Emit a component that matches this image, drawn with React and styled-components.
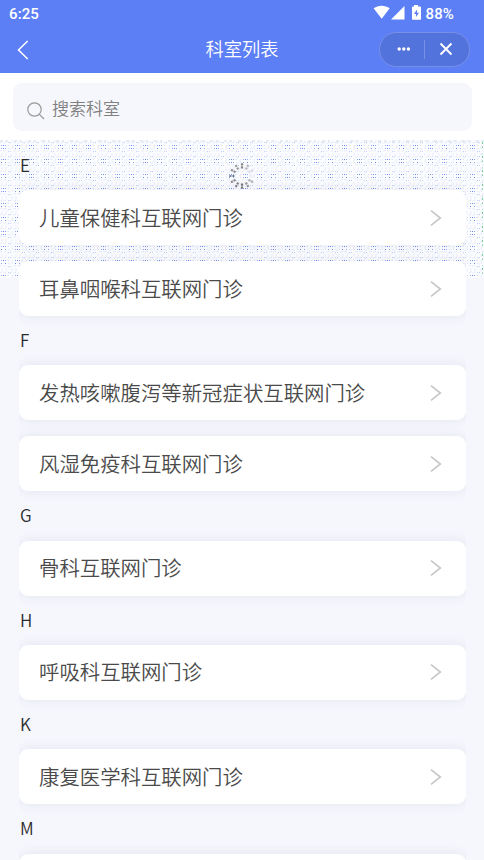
import React from 'react';
import styled, { createGlobalStyle } from 'styled-components';

const GlobalStyle = createGlobalStyle`
    *{
        box-sizing: border-box;
    }
    body{
        margin: 0;
        background: #f6f7fd;
        font-family: "Noto Sans CJK SC", sans-serif;
        font-weight: 350;
        overflow: hidden;
    }
`;

const groups = [
    { letter: 'E', items: ['儿童保健科互联网门诊', '耳鼻咽喉科互联网门诊'] },
    { letter: 'F', items: ['发热咳嗽腹泻等新冠症状互联网门诊', '风湿免疫科互联网门诊'] },
    { letter: 'G', items: ['骨科互联网门诊'] },
    { letter: 'H', items: ['呼吸科互联网门诊'] },
    { letter: 'K', items: ['康复医学科互联网门诊'] },
    { letter: 'M', items: [''] },
];

// dot offsets around the centre of one dither cell, by colour
const dotLayers = [
    { fill: '#f3f4fd', size: 2, dots: [[-6, -6], [-2, -6], [2, -6], [6, -4], [-4, -4], [0, -4], [4, -2], [-6, 0], [6, 2], [-4, 4], [0, 4], [4, 5], [-6, 7], [-2, 7], [2, 7]] },
    { fill: '#dfe5fb', size: 1, dots: [[-2, -4], [2, -4], [-5, -1], [5, -1], [-5, 2], [5, 2], [-2, 4], [2, 4]] },
    { fill: '#c6d1f9', size: 1, dots: [[5, -4], [7, -4], [5, 5], [7, 5]] },
    { fill: '#8fa8f5', size: 1, dots: [[-2, -1], [2, -1], [-2, 2], [2, 2]] },
];

const cells = [];
for (let row = 0; row < 10; row += 1) {
    for (let col = 0; col < 35; col += 1) {
        cells.push([Math.round(3 + col * 14.22), Math.round(6 + row * 14.4), (col + row * 2) % 3]);
    }
}

const square = (x, y, size) => `M${x} ${y}h${size}v${size}h-${size}z`;

function Dither() {
    return (
        <DitherSvg width="484" height="138" shapeRendering="crispEdges">
            <rect width="484" height="138" fill="#fcfdff" />
            {dotLayers.map(({ fill, size, dots }) => (
                <path
                    key={fill}
                    fill={fill}
                    d={cells.map(([x, y]) => dots.map(([dx, dy]) => square(x + dx, y + dy, size)).join('')).join('')}
                />
            ))}
            <path
                fill="#6888ef"
                d={cells.map(([x, y, kind]) => (
                    kind === 0 ? square(x, y - 1, 1) + square(x, y + 2, 1) : square(x + (kind === 1 ? 2 : -2), y + 2, 1) + square(x, y - 1, 1)
                )).join('')}
            />
            <path d="M0 1H484" stroke="#e2ecf1" strokeWidth="2" strokeDasharray="3 3 2 6" />
            <path d="M482.5 2V138" stroke="#72cf87" strokeDasharray="2 3 1 8" />
            <path d="M482.5 6V138" stroke="#c9e4dc" strokeDasharray="1 6 2 5" />
        </DitherSvg>
    );
}

const spokes = [
    '#888', '#b8b8be', '#dcdce2', '#eeeef4', '#b0b0b0', '#999',
    '#777', '#858585', '#8c8c8c', '#7d8699', '#909090', '#999',
];

function Spinner() {
    return (
        <SpinnerSvg width="30" height="30" viewBox="-15 -15 30 30">
            {spokes.map((color, i) => (
                <path
                    key={i}
                    d="M0 -7.5V-13"
                    stroke={color}
                    strokeWidth="2.2"
                    strokeDasharray="2.2 .8"
                    transform={`rotate(${i * 30})`}
                />
            ))}
        </SpinnerSvg>
    );
}

function StatusIcons() {
    return (
        <svg width="50" height="18" viewBox="0 0 50 18" fill="#fff">
            <path d="M.6 4.2C5.3 .8 12 .8 16.7 4.2L8.7 14.8Z" />
            <path d="M31.5 2V15.5H18Z" />
            <path d="M41 2.5V1h4v1.5h2.2q.8 0 .8.8v11.7q0 .8-.8.8h-7.4q-.8 0-.8-.8v-11.7q0-.8.8-.8Z" />
            <path d="M43.9 5.5L41 10H43V13L46 8.7H43.9Z" fill="#5d7ff6" />
        </svg>
    );
}

function Card({ name }) {
    return (
        <CardStyled>
            <span>{name}</span>
            <svg width="12" height="18" viewBox="0 0 12 18" fill="none" stroke="#c8c8c8" strokeWidth="1.7">
                <path d="M1 1.7L10.3 9L1 16.3" />
            </svg>
        </CardStyled>
    );
}

function App() {
    return (
        <Page>
            <GlobalStyle />
            <Header>
                <StatusBar>
                    <span>6:25</span>
                    <StatusRight>
                        <StatusIcons />
                        <span>88%</span>
                    </StatusRight>
                </StatusBar>
                <TitleBar>
                    <svg width="12" height="20" viewBox="0 0 12 20" fill="none" stroke="#fff" strokeWidth="1.5">
                        <path d="M10.7 1L1.5 10L10.7 19" />
                    </svg>
                    <Title>科室列表</Title>
                    <Capsule>
                        <svg width="14" height="4" viewBox="0 0 14 4" fill="#fff">
                            <circle cx="2.2" cy="2" r="1.7" />
                            <circle cx="6.8" cy="2" r="1.7" />
                            <circle cx="11.4" cy="2" r="1.7" />
                        </svg>
                        <i />
                        <svg width="14" height="14" viewBox="0 0 14 14" stroke="#fff" strokeWidth="1.9">
                            <path d="M1.5 1.5L12.5 12.5M12.5 1.5L1.5 12.5" />
                        </svg>
                    </Capsule>
                </TitleBar>
            </Header>
            <SearchArea>
                <SearchBox>
                    <svg width="18" height="18" viewBox="0 0 18 18" fill="none" stroke="#999" strokeWidth="1.2">
                        <circle cx="7.5" cy="7.5" r="6.7" />
                        <path d="M12.2 12.2L17 17" />
                    </svg>
                    <span>搜索科室</span>
                </SearchBox>
            </SearchArea>
            <List>
                <Dither />
                <Spinner />
                {groups.map((group) => (
                    <Group key={group.letter}>
                        <Letter>{group.letter}</Letter>
                        <Cards>
                            {group.items.map((name) => <Card key={name} name={name} />)}
                        </Cards>
                    </Group>
                ))}
            </List>
        </Page>
    );
}

const Page = styled.div`
    width: 484px;
    height: 860px;
    overflow: hidden;
    background: #f6f7fd;
`;

const Header = styled.header`
    height: 73px;
    background: #5d7ff6;
    color: #fff;
`;

const StatusBar = styled.div`
    display: flex;
    justify-content: space-between;
    align-items: center;
    height: 27px;
    padding: 1px 30px 0 9px;
    font: 500 15px/27px Roboto, sans-serif;
    letter-spacing: .1px;
`;

const StatusRight = styled.div`
    display: flex;
    align-items: center;
    gap: 3px;
    svg{
        margin-top: -2px;
    }
`;

const TitleBar = styled.div`
    display: grid;
    grid-template-columns: 100px 1fr 100px;
    align-items: center;
    height: 45px;
    padding: 0 15px 0 17px;
`;

const Title = styled.h1`
    margin: -3px 2px 0 0;
    font-size: 18.3px;
    font-weight: inherit;
    line-height: 26px;
    text-align: center;
`;

const Capsule = styled.div`
    display: flex;
    justify-content: space-between;
    align-items: center;
    justify-self: end;
    width: 91px;
    height: 35px;
    margin-right: -1px;
    padding: 0 16px 0 17px;
    border: 1px solid #7790e6;
    border-radius: 18px;
    background: #5272dc;
    svg{
        margin-top: -1px;
    }
    i{
        width: 1px;
        height: 19px;
        margin-right: 1px;
        background: #7890e5;
    }
`;

const SearchArea = styled.div`
    height: 67px;
    padding: 10px 12px 0 13px;
    background: #fff;
`;

const SearchBox = styled.div`
    display: flex;
    align-items: center;
    gap: 7px;
    height: 48px;
    padding-left: 14px;
    border-radius: 9px;
    background: #f6f7fd;
    color: #808080;
    font-size: 17px;
    line-height: 26px;
    svg{
        margin-top: 7px;
    }
    span{
        margin-top: 2px;
    }
`;

const List = styled.main`
    position: relative;
    padding: .8px 18px 0 19px;
`;

const DitherSvg = styled.svg`
    position: absolute;
    top: 0;
    left: 0;
`;

const SpinnerSvg = styled.svg`
    position: absolute;
    top: 21px;
    left: 227px;
`;

const Group = styled.section`
    position: relative;
`;

const Letter = styled.h2`
    height: 49.3px;
    margin: 0;
    padding-left: 1px;
    color: #2c2c2c;
    font-size: 17px;
    font-weight: inherit;
    line-height: 47.6px;
`;

const Cards = styled.div`
    display: grid;
    gap: 16px;
    clip-path: inset(-16px 0);
`;

const CardStyled = styled.div`
    display: flex;
    justify-content: space-between;
    align-items: center;
    height: 55px;
    padding: 0 24px 0 20px;
    border-radius: 9px;
    background: #fff;
    box-shadow: 0 0 12px rgba(60, 65, 100, .1);
    color: #4a4a4a;
    font-size: 20.4px;
    span{
        margin-top: -2px;
    }
`;

export default App;
